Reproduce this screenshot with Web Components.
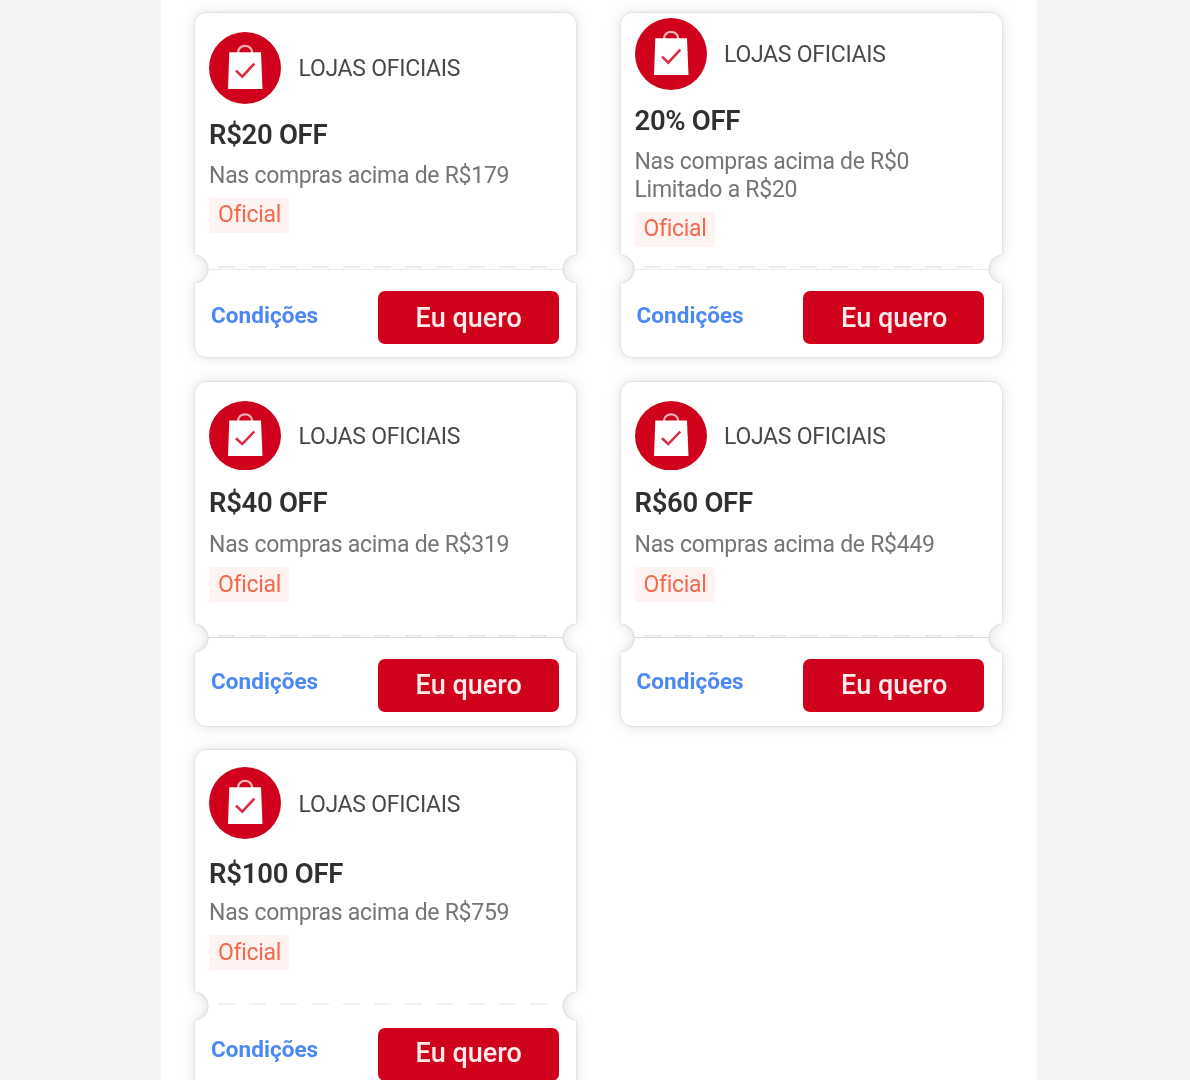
<!DOCTYPE html>
<html lang="pt-BR">
<head>
<meta charset="utf-8">
<title>Cupons</title>
<style>
html,body{margin:0;height:1080px;overflow:hidden;background:#f4f4f4;font-family:Roboto,"Liberation Sans",sans-serif}
</style>
</head>
<body>
<coupon-page>
  <coupon-card style="--line:#ebebeb;--badgepad:3px" heading="R$20 OFF" hw="117.5">
    <fit-text width="299.5">Nas compras acima de R$179</fit-text>
  </coupon-card>
  <coupon-card style="--top:5px;--line:#ebebeb" heading="20% OFF" hw="105">
    <fit-text width="274">Nas compras acima de R$0</fit-text>
    <fit-text width="162">Limitado a R$20</fit-text>
  </coupon-card>
  <coupon-card style="--logo:69.5px;--label:0px;--line:#dcdcdc;--cta:-.5px;--ctatext:0px;--terms:-2px;--badgepad:0px;--badgetop:1px" heading="R$40 OFF" hw="117.5">
    <fit-text width="299.5">Nas compras acima de R$319</fit-text>
  </coupon-card>
  <coupon-card style="--logo:69.5px;--label:0px;--line:#dcdcdc;--cta:-.5px;--ctatext:0px;--terms:-2px;--badgepad:0px;--badgetop:1px" heading="R$60 OFF" hw="117.5">
    <fit-text width="299.5">Nas compras acima de R$449</fit-text>
  </coupon-card>
  <coupon-card style="--top:17px;--label:3px;--title:17.5px;--desc:8px;--line:transparent;--dash:#f0f0f0;--terms:-3px;--ctatext:0px;--ctapad:2px;--badgepad:0px;--badgetop:1.5px" heading="R$100 OFF" hw="133.5">
    <fit-text width="299.5">Nas compras acima de R$759</fit-text>
  </coupon-card>
</coupon-page>
<script>
// Text run tracked to a fixed advance width.
class FitText extends HTMLElement{
  connectedCallback(){
    if(!this.shadowRoot){
      this.attachShadow({mode:'open'}).innerHTML=
        '<style>:host{display:block;white-space:nowrap}span{display:inline-block}</style><span><slot></slot></span>';
    }
    const s=this.shadowRoot.querySelector('span');
    const n=this.textContent.trim().length;
    s.style.letterSpacing=((+this.getAttribute('width')+.7-s.getBoundingClientRect().width)/n)+'px';
  }
}

class StoreLogo extends HTMLElement{
  connectedCallback(){
    this.attachShadow({mode:'open'}).innerHTML=`
<style>:host{display:block;width:72px;height:var(--logo,72px)}svg{display:block;width:100%;height:100%}</style>
<svg viewBox="0 0 72 72" preserveAspectRatio="none" fill="none">
<ellipse cx="36" cy="36" rx="36" ry="36" fill="#d0021b"/>
<path d="M29.2 21v-1.2a6.9 6 0 0 1 13.8 0V21" stroke="#f5b3bc" stroke-width="2.3"/>
<path d="M20.3 20.3H52l1.5 36.7H19z" fill="#fff"/>
<path d="M27 38.6l6.3 6 12-13" stroke="#dc2b43" stroke-width="2.6"/>
</svg>`;
  }
}

class OfficialBadge extends HTMLElement{
  connectedCallback(){
    this.attachShadow({mode:'open'}).innerHTML=`
<style>:host{display:flex;box-sizing:border-box;width:80px;height:35px;padding:var(--badgetop,0px) 0 var(--badgepad,2px) 9px;align-items:center;background:#fff3f1;color:#f4694e;font-size:23px;line-height:27px;border-radius:2px}</style>
<fit-text width="61.5">Oficial</fit-text>`;
  }
}

class ClaimButton extends HTMLElement{
  connectedCallback(){
    this.attachShadow({mode:'open'}).innerHTML=`
<style>:host{display:block}
button{all:unset;box-sizing:border-box;width:181px;height:53.5px;padding:var(--ctatext,2px) 0 var(--ctapad,0px) 1px;display:flex;align-items:center;justify-content:center;background:#d0021b;border-radius:7px;color:#ffebee;font:500 27px/32px Roboto,sans-serif;cursor:pointer}</style>
<button><fit-text width="105.5">Eu quero</fit-text></button>`;
  }
}

class CouponCard extends HTMLElement{
  connectedCallback(){
    this.attachShadow({mode:'open'}).innerHTML=`
<style>
:host{display:block;filter:drop-shadow(0 0 1.2px rgba(0,0,0,.17)) drop-shadow(0 0 7px rgba(0,0,0,.13))}
.card{height:344px;background:#fff;border-radius:11px;display:flex;flex-direction:column;
 mask:radial-gradient(circle at -1px 256px,transparent 14px,#000 15px),
  radial-gradient(circle at calc(100% + 1px) 256px,transparent 14px,#000 15px);
 mask-composite:intersect}
.info{box-sizing:border-box;height:253px;padding:var(--top,19px) 14px 0;display:flex;flex-direction:column}
header{display:flex;align-items:center;gap:17.5px;height:72px;font-size:23px;line-height:28px;color:#484848}
header fit-text{padding-top:var(--label,1.5px)}
header store-logo{align-self:flex-start}
h2{margin:var(--title,13.5px) 0 0;font-weight:600;font-size:27.5px;line-height:34px;color:#303030}
.desc{margin-top:var(--desc,10.5px);font-size:23px;line-height:27.5px;color:#757575}
official-badge{margin-top:8.5px}
.rule{margin:0 13px;height:2.5px;border-bottom:1.5px solid var(--line)}
.rule div{height:2px;margin:0 14px 0 10px;background:repeating-linear-gradient(90deg,var(--dash,#ececec) 0 17px,transparent 17px 31.2px)}
footer{display:flex;justify-content:space-between;padding:0 17.3px 0 16px}
.terms{padding-top:31px;margin-top:var(--terms,0);color:#4c88f5;font:700 22.5px/28px Roboto,sans-serif}
claim-button{margin-top:calc(21px + var(--cta,0px))}
</style>
<div class="card">
 <section class="info">
  <header><store-logo></store-logo><fit-text width="161">LOJAS OFICIAIS</fit-text></header>
  <h2><fit-text width="${this.getAttribute('hw')}">${this.getAttribute('heading')}</fit-text></h2>
  <div class="desc"><slot></slot></div>
  <official-badge></official-badge>
 </section>
 <div class="rule"><div></div></div>
 <footer><div class="terms"><fit-text width="106.5">Condições</fit-text></div><claim-button></claim-button></footer>
</div>`;
  }
}

class CouponPage extends HTMLElement{
  connectedCallback(){
    this.attachShadow({mode:'open'}).innerHTML=`
<style>
:host{display:block;box-sizing:border-box;width:876px;height:1080px;margin-left:161px;padding:13px 36px 0 34px;background:#fff;overflow:hidden}
.grid{display:grid;grid-template-columns:381px 381px;column-gap:44.5px;row-gap:24.5px}
</style><div class="grid"><slot></slot></div>`;
  }
}
customElements.define('coupon-page',CouponPage);
customElements.define('coupon-card',CouponCard);
customElements.define('store-logo',StoreLogo);
customElements.define('official-badge',OfficialBadge);
customElements.define('claim-button',ClaimButton);
customElements.define('fit-text',FitText);
</script>
</body>
</html>
